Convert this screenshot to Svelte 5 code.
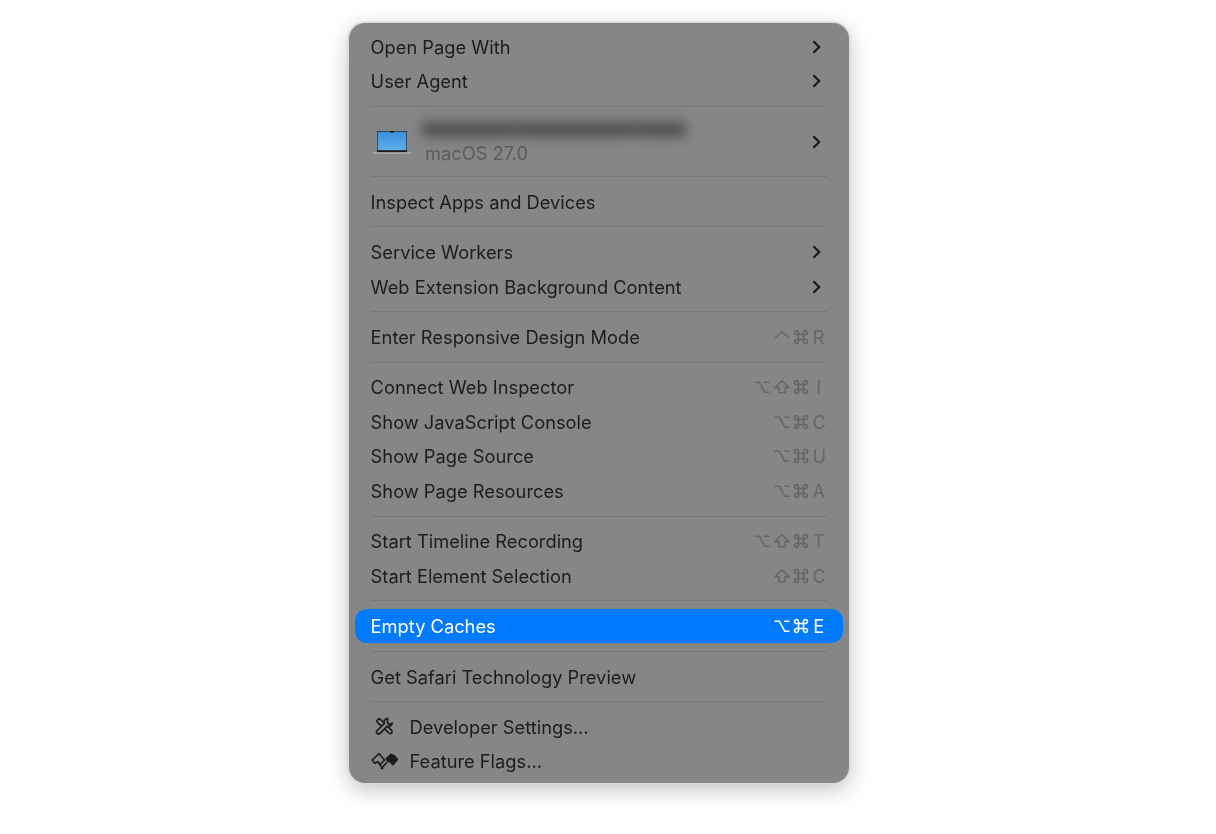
<script>
	const groups = [
		[
			{ label: 'Open Page With', sub: true },
			{ label: 'User Agent', sub: true }
		],
		[{ device: true }],
		[{ label: 'Inspect Apps and Devices' }],
		[
			{ label: 'Service Workers', sub: true },
			{ label: 'Web Extension Background Content', sub: true }
		],
		[{ label: 'Enter Responsive Design Mode', keys: ['ctrl', 'cmd'], letter: 'R' }],
		[
			{ label: 'Connect Web Inspector', keys: ['opt', 'shift', 'cmd'], letter: 'I' },
			{ label: 'Show JavaScript Console', keys: ['opt', 'cmd'], letter: 'C' },
			{ label: 'Show Page Source', keys: ['opt', 'cmd'], letter: 'U' },
			{ label: 'Show Page Resources', keys: ['opt', 'cmd'], letter: 'A' }
		],
		[
			{ label: 'Start Timeline Recording', keys: ['opt', 'shift', 'cmd'], letter: 'T' },
			{ label: 'Start Element Selection', keys: ['shift', 'cmd'], letter: 'C' }
		],
		[{ label: 'Empty Caches', keys: ['opt', 'cmd'], letter: 'E', active: true }],
		[{ label: 'Get Safari Technology Preview' }],
		[
			{ label: 'Developer Settings…', icon: 'tools' },
			{ label: 'Feature Flags…', icon: 'flags' }
		]
	];
</script>

{#snippet modifier(name)}
	<svg class="mod" viewBox="0 0 16 16" fill="none" stroke="currentColor" stroke-width="1.6">
		{#if name === 'ctrl'}
			<path d="M1 9 8 2.5 15 9" />
		{:else if name === 'opt'}
			<path d="M0.5 3.2h4.8l5.4 10h4.8M10 3.2h5.5" />
		{:else if name === 'shift'}
			<path d="M8 1.8 1 8.6h3.8v5.2h6.4V8.6H15z" stroke-linejoin="round" />
		{:else}
			<path d="M5.5 5.5h5v5h-5zM5.5 5.5H4a2 2 0 1 1 1.5-1.5zM10.5 5.5V4a2 2 0 1 1 1.5 1.5zM5.5 10.5V12A2 2 0 1 1 4 10.5zM10.5 10.5H12A2 2 0 1 1 10.5 12z" />
		{/if}
	</svg>
{/snippet}

{#snippet chevron()}
	<svg class="chevron" width="9" height="14" viewBox="0 0 9 14" fill="none" stroke="#1a1a1a" stroke-width="2.2">
		<path d="M1.4 1.2 7.2 7l-5.8 5.8" />
	</svg>
{/snippet}

{#snippet row(item)}
	<div class="row" class:active={item.active}>
		{#if item.icon}
			<span class="slot">
				{#if item.icon === 'tools'}
					<svg class="tools" width="19" height="19" viewBox="0 0 19 19" fill="none" stroke="#1c1c1c" stroke-width="1.7" stroke-linejoin="round">
						<path d="M1.6 4 4 1.6l2.4 1.6 10 10a1.7 1.7 0 0 1-2.4 2.9L3.6 6.4z" />
						<path d="M12.4 1.4a3.8 3.8 0 0 0-3 4.9l-7.2 7.2a2 2 0 0 0 2.9 2.9l7.2-7.2a3.8 3.8 0 0 0 5-3.2l-2.6 1.6-2.2-1.6.4-3.2z" fill="#868686" />
					</svg>
				{:else}
					<svg width="28" height="18" viewBox="0 0 28 18" fill="none" stroke="#1c1c1c" stroke-width="1.6" stroke-linejoin="round">
						<path d="M1.2 8 8 1.6 13.6 8l-4.4 4.6-2.6-3L4 11.4z" />
						<path d="M6.6 9.6 12 17M15.8 10.4 10 17" />
						<path d="M14.6 6.2 19.6 1.4l3.6 1.4 4.4 4.4-5.6 6.6-3.6-3.6-2.2.4z" fill="#1c1c1c" stroke="none" />
					</svg>
				{/if}
			</span>
		{/if}
		<span class="label">{item.label}</span>
		{#if item.sub}
			{@render chevron()}
		{/if}
		{#if item.keys}
			<span class="keys">
				{#each item.keys as key}
					{@render modifier(key)}
				{/each}
				<span class="letter">{item.letter}</span>
			</span>
		{/if}
	</div>
{/snippet}

<div class="page">
	<div class="menu">
		{#each groups as group, i}
			{#if i > 0}
				<div class="sep"></div>
			{/if}
			{#each group as item}
				{#if item.device}
					<div class="device">
						<svg class="laptop" width="42" height="26" viewBox="0 0 42 26">
							<defs>
								<linearGradient id="screen" x1="0" y1="0" x2="0" y2="1">
									<stop offset="0" stop-color="#3a8fdc" />
									<stop offset="1" stop-color="#62aeec" />
								</linearGradient>
							</defs>
							<rect x="5" y="1" width="30" height="21.4" rx="1" fill="#1c1c1e" />
							<rect x="5.6" y="1.6" width="28.8" height="18.6" fill="url(#screen)" />
							<rect x="18" y="1" width="4" height="1.6" fill="#1c1c1e" />
							<rect x="0.5" y="22.2" width="39" height="1.6" rx="0.8" fill="#b0b0b0" />
						</svg>
						<div class="device-text">
							<div class="blurred">
								<span class="b1"></span>
								<span class="b2"></span>
								<span class="b3"></span>
							</div>
							<div class="os">macOS 27.0</div>
						</div>
						{@render chevron()}
					</div>
				{:else}
					{@render row(item)}
				{/if}
			{/each}
		{/each}
	</div>
</div>

<style>
	:global(body) {
		background: #fff;
		font-family: Inter, "Liberation Sans", sans-serif;
	}

	.page {
		padding: 23px 0 0 349px;
		height: 811px;
		overflow: hidden;
	}

	.menu {
		width: 500px;
		height: 760px;
		box-sizing: border-box;
		padding: 6.6px 0 5px;
		background: #868686;
		border-radius: 16px;
		box-shadow: 0 0 0 1.5px #dadada, 0 6px 22px rgba(0, 0, 0, 0.26);
		color: #1c1c1c;
		font-size: 18.3px;
		filter: blur(0.3px);
	}

	.row {
		display: flex;
		align-items: center;
		justify-content: space-between;
		height: 34.5px;
		margin: 0 6px;
		padding: 0 18px 0 15.6px;
		border-radius: 12px;
	}

	.row.active {
		background: #007aff;
		color: #fff;
	}

	.label {
		flex: 1;
		white-space: nowrap;
	}

	.slot {
		flex: none;
		display: flex;
		width: 38.9px;
	}

	.tools {
		margin-left: 4px;
	}

	.chevron {
		flex: none;
		margin-right: 4px;
	}

	.keys {
		display: flex;
		align-items: center;
		gap: 3.5px;
		color: #666;
	}

	.active .keys {
		color: #fff;
	}

	.mod {
		width: 16px;
		height: 16px;
	}

	.letter {
		width: 12.5px;
		text-align: center;
	}

	.sep {
		height: 1px;
		margin: 7.45px 22px;
		background: #767676;
	}

	.device {
		display: flex;
		align-items: center;
		height: 54.2px;
		padding: 0 24px 0 22px;
	}

	.laptop {
		flex: none;
		margin-left: 1px;
		margin-top: 3px;
	}

	.device-text {
		flex: 1;
		margin-left: 11px;
		padding-top: 3px;
	}

	.blurred {
		display: flex;
		gap: 1px;
		height: 15px;
		margin-left: -3px;
		filter: blur(6px);
	}

	.blurred span {
		height: 15px;
		background: #505050;
	}

	.b1 {
		width: 94px;
	}

	.b2 {
		width: 118px;
	}

	.b3 {
		width: 50px;
	}

	.os {
		margin-top: 5px;
		color: #5c5c5c;
	}
</style>
